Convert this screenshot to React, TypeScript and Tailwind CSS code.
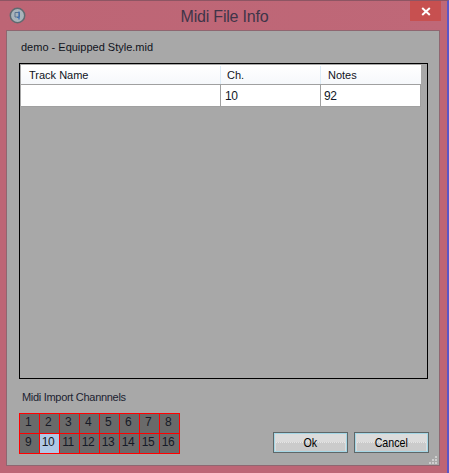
const font = { fontFamily: '"Liberation Sans", Arial, sans-serif' };

const channels = Array.from({ length: 16 }, (_, i) => i + 1);

function AppIcon() {
  return (
    <svg width="17" height="17" viewBox="0 0 17 17" className="block">
      <circle cx="8.5" cy="8.5" r="7.2" fill="#a9b4bb" stroke="#5f6a70" strokeWidth="1.5" />
      <path d="M6 5.5h4.5v4.5H6z" fill="none" stroke="#5b7390" strokeWidth="1" />
      <path d="M10 4.5v8" stroke="#3f6fb0" strokeWidth="1.3" fill="none" />
      <path d="M8 10.5h2" stroke="#3f6fb0" strokeWidth="1" fill="none" />
    </svg>
  );
}

function Grip() {
  return (
    <svg width="9" height="9" viewBox="0 0 9 9" className="block">
      <g fill="#cfcfcf">
        <rect x="6" y="0" width="2" height="2" />
        <rect x="3" y="3" width="2" height="2" />
        <rect x="6" y="3" width="2" height="2" />
        <rect x="0" y="6" width="2" height="2" />
        <rect x="3" y="6" width="2" height="2" />
        <rect x="6" y="6" width="2" height="2" />
      </g>
    </svg>
  );
}

function Btn({ label }: { label: string }) {
  return (
    <div className="relative h-[21px] w-[75px] border border-[#5f6768] bg-[#dcdcdc] shadow-[inset_0_0_0_1px_#a5d7e6] flex items-center justify-center">
      <div className="absolute left-[2px] right-[2px] bottom-[1px] h-[9px] bg-[#cbcbcb] border-t border-dotted border-[#e6e6e6]" />
      <span className="relative text-[13px] leading-none text-black scale-x-[0.82]">{label}</span>
    </div>
  );
}

export default function App() {
  return (
    <div
      className="w-[449px] h-[473px] bg-[#bd6575] border-r-2 border-r-[#5a55c8] border-t border-t-[#8d5563] flex flex-col overflow-hidden"
      style={font}
    >
      <div className="relative h-[29px] shrink-0 flex items-center justify-center bg-gradient-to-r from-[#bd6575] to-[#bf6878]">
        <div className="absolute left-[9px] top-[6px]">
          <AppIcon />
        </div>
        <span className="text-[16px] leading-none text-[#3f3549] tracking-[-0.2px] ml-[2px] mt-[2px]">Midi File Info</span>
        <div className="absolute right-[6px] top-0 w-[31px] h-[20px] bg-[#c75050] flex items-center justify-center">
          <svg width="10" height="9" viewBox="0 0 10 9" className="block">
            <path d="M1.2 1l7.6 7M8.8 1l-7.6 7" stroke="#fff" strokeWidth="2" fill="none" />
          </svg>
        </div>
      </div>

      <div className="ml-[6px] w-[434px] h-[436px] shrink-0 bg-[#a8a8a8] border border-[#8f6670] flex flex-col pl-[12px] pr-[11px] relative">
        <div className="h-[32px] shrink-0 flex items-center pl-[2px] text-[11px] leading-none text-[#10131c]">demo - Equipped Style.mid</div>

        <div className="h-[316px] border border-black pt-[1px] pl-[1px] shrink-0">
          <div className="w-[400px]">
            <div className="h-[20px] pt-[1px] bg-gradient-to-b from-[#ffffff] to-[#f6f8fb] grid grid-cols-[200px_100px_100px] text-[11px] leading-none text-[#10131c] border-b border-[#a0a0a0]">
              <div className="border-r border-[#dcebf7] flex items-center pl-[8px]">Track Name</div>
              <div className="border-r border-[#dcebf7] flex items-center pl-[6px]">Ch.</div>
              <div className="flex items-center pl-[7px]">Notes</div>
            </div>
            <div className="h-[22px] bg-white grid grid-cols-[200px_100px_100px] text-[12px] tracking-[-0.5px] leading-none text-[#111827] border-b border-r border-[#a0a0a0]">
              <div className="border-r border-[#a0a0a0]" />
              <div className="border-r border-[#a0a0a0] flex items-center pl-[4px]">10</div>
              <div className="flex items-center pl-[3px]">92</div>
            </div>
          </div>
        </div>

        <div className="h-[34px] shrink-0 flex items-center pl-[3px] pt-[2px] text-[11px] tracking-[-0.3px] leading-none text-[#1b2230]">Midi Import Channnels</div>

        <div className="flex justify-between items-start -mr-[1px]">
          <div className="grid grid-cols-[repeat(8,20px)] grid-rows-[20px_20px] w-[160px] border-t border-l border-[#ff0000] shrink-0 box-content -mr-[1px] -mb-[1px]">
            {channels.map((n) => (
              <div
                key={n}
                className={
                  "border-r border-b border-[#ff0000] flex items-center justify-center pr-[3px] pb-[3px] text-[12px] tracking-[-0.5px] leading-none text-[#161a26] " +
                  (n === 10 ? "bg-[#b0c8e6]" : "bg-[#6a6a6a]")
                }
              >
                {n}
              </div>
            ))}
          </div>
          <div className="flex gap-[6px] mt-[19px]">
            <Btn label="Ok" />
            <Btn label="Cancel" />
          </div>
        </div>

        <div className="absolute right-[1px] bottom-0">
          <Grip />
        </div>
      </div>
    </div>
  );
}
